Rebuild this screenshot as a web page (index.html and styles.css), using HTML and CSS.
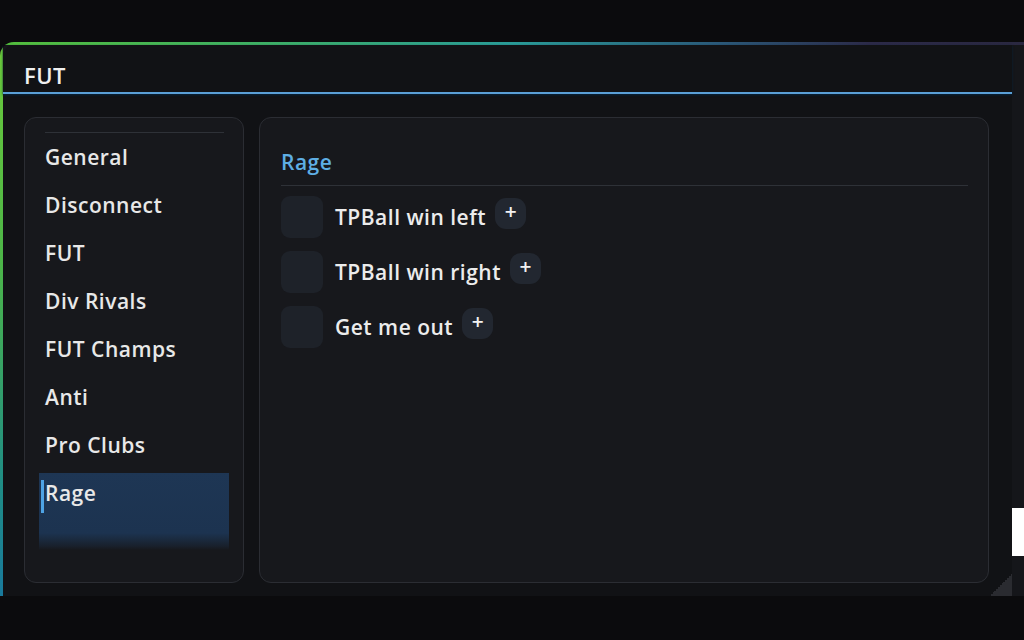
FILE: index.html
```html
<!DOCTYPE html>
<html>
<head>
<meta charset="utf-8">
<link rel="stylesheet" href="styles.css">
</head>
<body>
<div class="screen">
  <div class="frame">
    <div class="window">
      <div class="titlebar">FUT</div>
      <div class="content">
        <nav class="sidebar">
          <div class="side-rule"></div>
          <div class="nav-item">General</div>
          <div class="nav-item">Disconnect</div>
          <div class="nav-item">FUT</div>
          <div class="nav-item">Div Rivals</div>
          <div class="nav-item">FUT Champs</div>
          <div class="nav-item">Anti</div>
          <div class="nav-item">Pro Clubs</div>
          <div class="nav-item active"><span class="accent"></span><span>Rage</span></div>
        </nav>
        <section class="main">
          <h2 class="section-title">Rage</h2>
          <div class="section-rule"></div>
          <div class="option">
            <div class="check"></div>
            <span class="label">TPBall win left</span>
            <button class="plus">+</button>
          </div>
          <div class="option">
            <div class="check"></div>
            <span class="label">TPBall win right</span>
            <button class="plus">+</button>
          </div>
          <div class="option">
            <div class="check"></div>
            <span class="label">Get me out</span>
            <button class="plus">+</button>
          </div>
        </section>
      </div>
      <div class="grip"></div>
    </div>
    <div class="strip"><div class="strip-block"></div></div>
  </div>
</div>
</body>
</html>
```

FILE: styles.css
```css
* { box-sizing: border-box; }
html, body {
  margin: 0;
  padding: 0;
  width: 1024px;
  height: 640px;
  overflow: hidden;
  background: #0b0b0d;
  font-family: "Open Sans", "Noto Sans", sans-serif;
}
.screen {
  padding-top: 42px;
  height: 640px;
}
.frame {
  height: 554px;
  display: flex;
  border-top-left-radius: 14px;
  padding: 3px 0 0 3px;
  background:
    linear-gradient(to right, #55bf3c 0%, #3fb064 25%, #2a9c98 50%, #2b5a7a 70%, #2c2a48 85%, #2a2840 100%) top left / 100% 3px no-repeat,
    linear-gradient(to bottom, #6ccb3a 0%, #4cb548 40%, #1f8d86 80%, #197a9c 100%) top left / 3px 100% no-repeat,
    #15161a;
}
.window {
  position: relative;
  flex: 1;
  background: #111215;
  border-top-left-radius: 11px;
  display: flex;
  flex-direction: column;
}
.titlebar {
  height: 49px;
  padding: 12px 0 0 21px;
  display: flex;
  align-items: center;
  color: #f0f0f0;
  font-size: 22px;
  font-weight: 600;
  letter-spacing: 0.5px;
  border-bottom: 2px solid #5a9fd6;
  box-shadow: 0 1px 2px #06223a;
}
.content {
  flex: 1;
  display: flex;
  gap: 15px;
  padding: 23px 23px 13px 21px;
}
.sidebar {
  width: 220px;
  background: #17181c;
  border: 1px solid #2b2d33;
  border-radius: 12px;
  padding: 14px 19px 0 20px;
  display: flex;
  flex-direction: column;
}
.side-rule {
  height: 1px;
  background: #2e3137;
  flex-shrink: 0;
}
.nav-item {
  height: 48px;
  display: flex;
  align-items: center;
  color: #e8e8e8;
  font-size: 21px;
  font-weight: 600;
  letter-spacing: 0.5px;
  flex-shrink: 0;
}
.nav-item.active {
  margin: 4px -5px 0 -6px;
  height: 77px;
  padding: 7px 0 0 2px;
  align-items: flex-start;
  gap: 1px;
  line-height: 26px;
  background: linear-gradient(to bottom, #1e3654 0%, #1c3350 78%, rgba(28, 51, 80, 0.3) 95%, rgba(23, 24, 28, 0) 100%);
}
.accent {
  width: 3px;
  height: 33px;
  background: #4ea3e4;
  flex-shrink: 0;
}
.main {
  flex: 1;
  background: #17181c;
  border: 1px solid #2b2d33;
  border-radius: 12px;
  padding: 31px 20px 0 21px;
}
.section-title {
  margin: 0;
  font-size: 21px;
  font-weight: 600;
  letter-spacing: 0.5px;
  line-height: 26px;
  color: #5eaee4;
}
.section-rule {
  height: 1px;
  background: #2e3137;
  margin-top: 10px;
  margin-bottom: 10px;
}
.option {
  display: flex;
  align-items: center;
  height: 42px;
  margin-bottom: 13px;
}
.check {
  width: 42px;
  height: 42px;
  border-radius: 9px;
  background: #1e2229;
  flex-shrink: 0;
}
.label {
  margin-left: 12px;
  color: #ececec;
  font-size: 21px;
  font-weight: 600;
  letter-spacing: 0.5px;
}
.plus {
  align-self: flex-start;
  margin-top: 2px;
  margin-left: 9px;
  width: 31px;
  height: 31px;
  border: none;
  border-radius: 11px;
  background: #222730;
  color: #f2f2f2;
  font-family: "DejaVu Sans", sans-serif;
  font-size: 16px;
  font-weight: 700;
  padding: 0 0 3px 0;
  line-height: 28px;
}
.grip {
  position: absolute;
  right: 0;
  bottom: 0;
  width: 22px;
  height: 22px;
  background: linear-gradient(135deg, transparent 50%, #2a2b30 50%);
}
.strip {
  width: 12px;
  background: #15161a;
  padding-top: 463px;
}
.strip-block {
  height: 48px;
  background: #ffffff;
}
```
